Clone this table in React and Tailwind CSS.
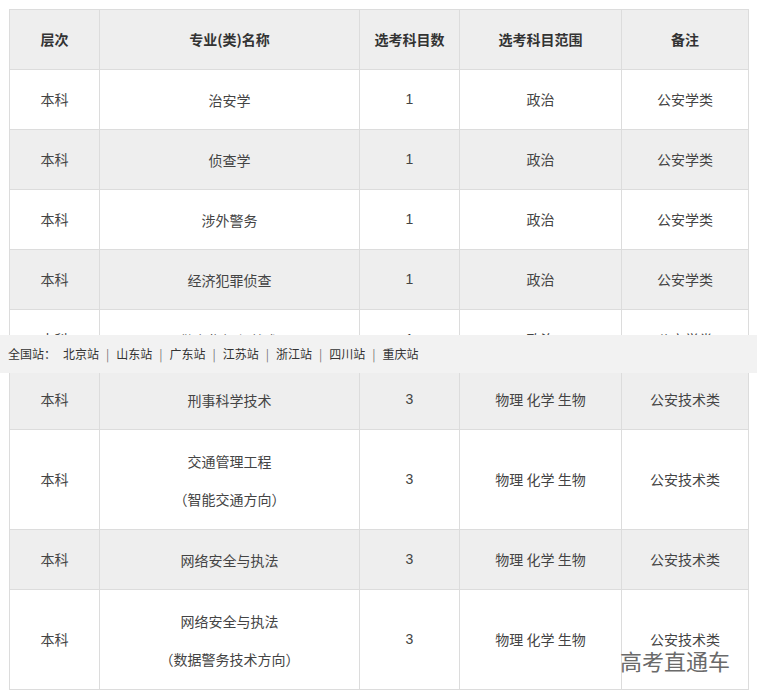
import React from 'react'

const rows = [
  { level: '本科', name: ['治安学'], count: '1', range: '政治', note: '公安学类' },
  { level: '本科', name: ['侦查学'], count: '1', range: '政治', note: '公安学类' },
  { level: '本科', name: ['涉外警务'], count: '1', range: '政治', note: '公安学类' },
  { level: '本科', name: ['经济犯罪侦查'], count: '1', range: '政治', note: '公安学类' },
  { level: '本科', name: ['警务指挥与战术'], count: '1', range: '政治', note: '公安学类' },
  { level: '本科', name: ['刑事科学技术'], count: '3', range: '物理 化学 生物', note: '公安技术类' },
  { level: '本科', name: ['交通管理工程', '（智能交通方向）'], count: '3', range: '物理 化学 生物', note: '公安技术类' },
  { level: '本科', name: ['网络安全与执法'], count: '3', range: '物理 化学 生物', note: '公安技术类' },
  { level: '本科', name: ['网络安全与执法', '（数据警务技术方向）'], count: '3', range: '物理 化学 生物', note: '公安技术类' },
]

const stations = ['北京站', '山东站', '广东站', '江苏站', '浙江站', '四川站', '重庆站']

const cell = 'border border-[#dcdcdc] text-center align-middle p-0'

const App = () => {
  return (
    <div className="relative min-h-[700px] bg-white font-['Noto_Sans_CJK_SC','Microsoft_YaHei',sans-serif] text-[14px] text-[#444]">
      <div className="pt-[9px] px-[9px]">
        <table className="w-[739px] table-fixed border-collapse">
          <colgroup>
            <col className="w-[90px]" />
            <col className="w-[260px]" />
            <col className="w-[100px]" />
            <col className="w-[162px]" />
            <col className="w-[127px]" />
          </colgroup>
          <thead>
            <tr className="h-[60px] bg-[#eeeeee] font-bold text-[#333]">
              <th className={cell}>层次</th>
              <th className={cell}>专业(类)名称</th>
              <th className={cell}>选考科目数</th>
              <th className={cell}>选考科目范围</th>
              <th className={cell}>备注</th>
            </tr>
          </thead>
          <tbody>
            {rows.map((r, i) => (
              <tr
                key={i}
                className={`${r.name.length > 1 ? 'h-[100px]' : 'h-[60px]'} ${i % 2 === 1 ? 'bg-[#eeeeee]' : 'bg-white'}`}
              >
                <td className={cell}>{r.level}</td>
                <td className={cell}>
                  <div className="flex flex-col items-center gap-[18px] leading-[20px]">
                    {r.name.map((n) => (
                      <p key={n}>{n}</p>
                    ))}
                  </div>
                </td>
                <td className={`${cell} font-['Liberation_Sans',sans-serif]`}>{r.count}</td>
                <td className={cell}>{r.range}</td>
                <td className={cell}>{r.note}</td>
              </tr>
            ))}
          </tbody>
        </table>
      </div>

      {/* site switch bar */}
      <div className="absolute left-0 right-0 top-[335px] h-[38px] bg-[#f2f2f2] flex items-center pl-[8px] text-[12px] text-[#333]">
        <span className="mr-[7px]">全国站：</span>
        {stations.map((s, i) => (
          <span key={s} className="flex items-center">
            {i > 0 && <span className="mx-[7px] text-[#777]">|</span>}
            {s}
          </span>
        ))}
      </div>

      {/* watermark */}
      <div className="absolute left-[620px] top-[645px] text-[22px] leading-[30px] text-[#6a6a6a]">
        高考直通车
      </div>
    </div>
  )
}

export default App
